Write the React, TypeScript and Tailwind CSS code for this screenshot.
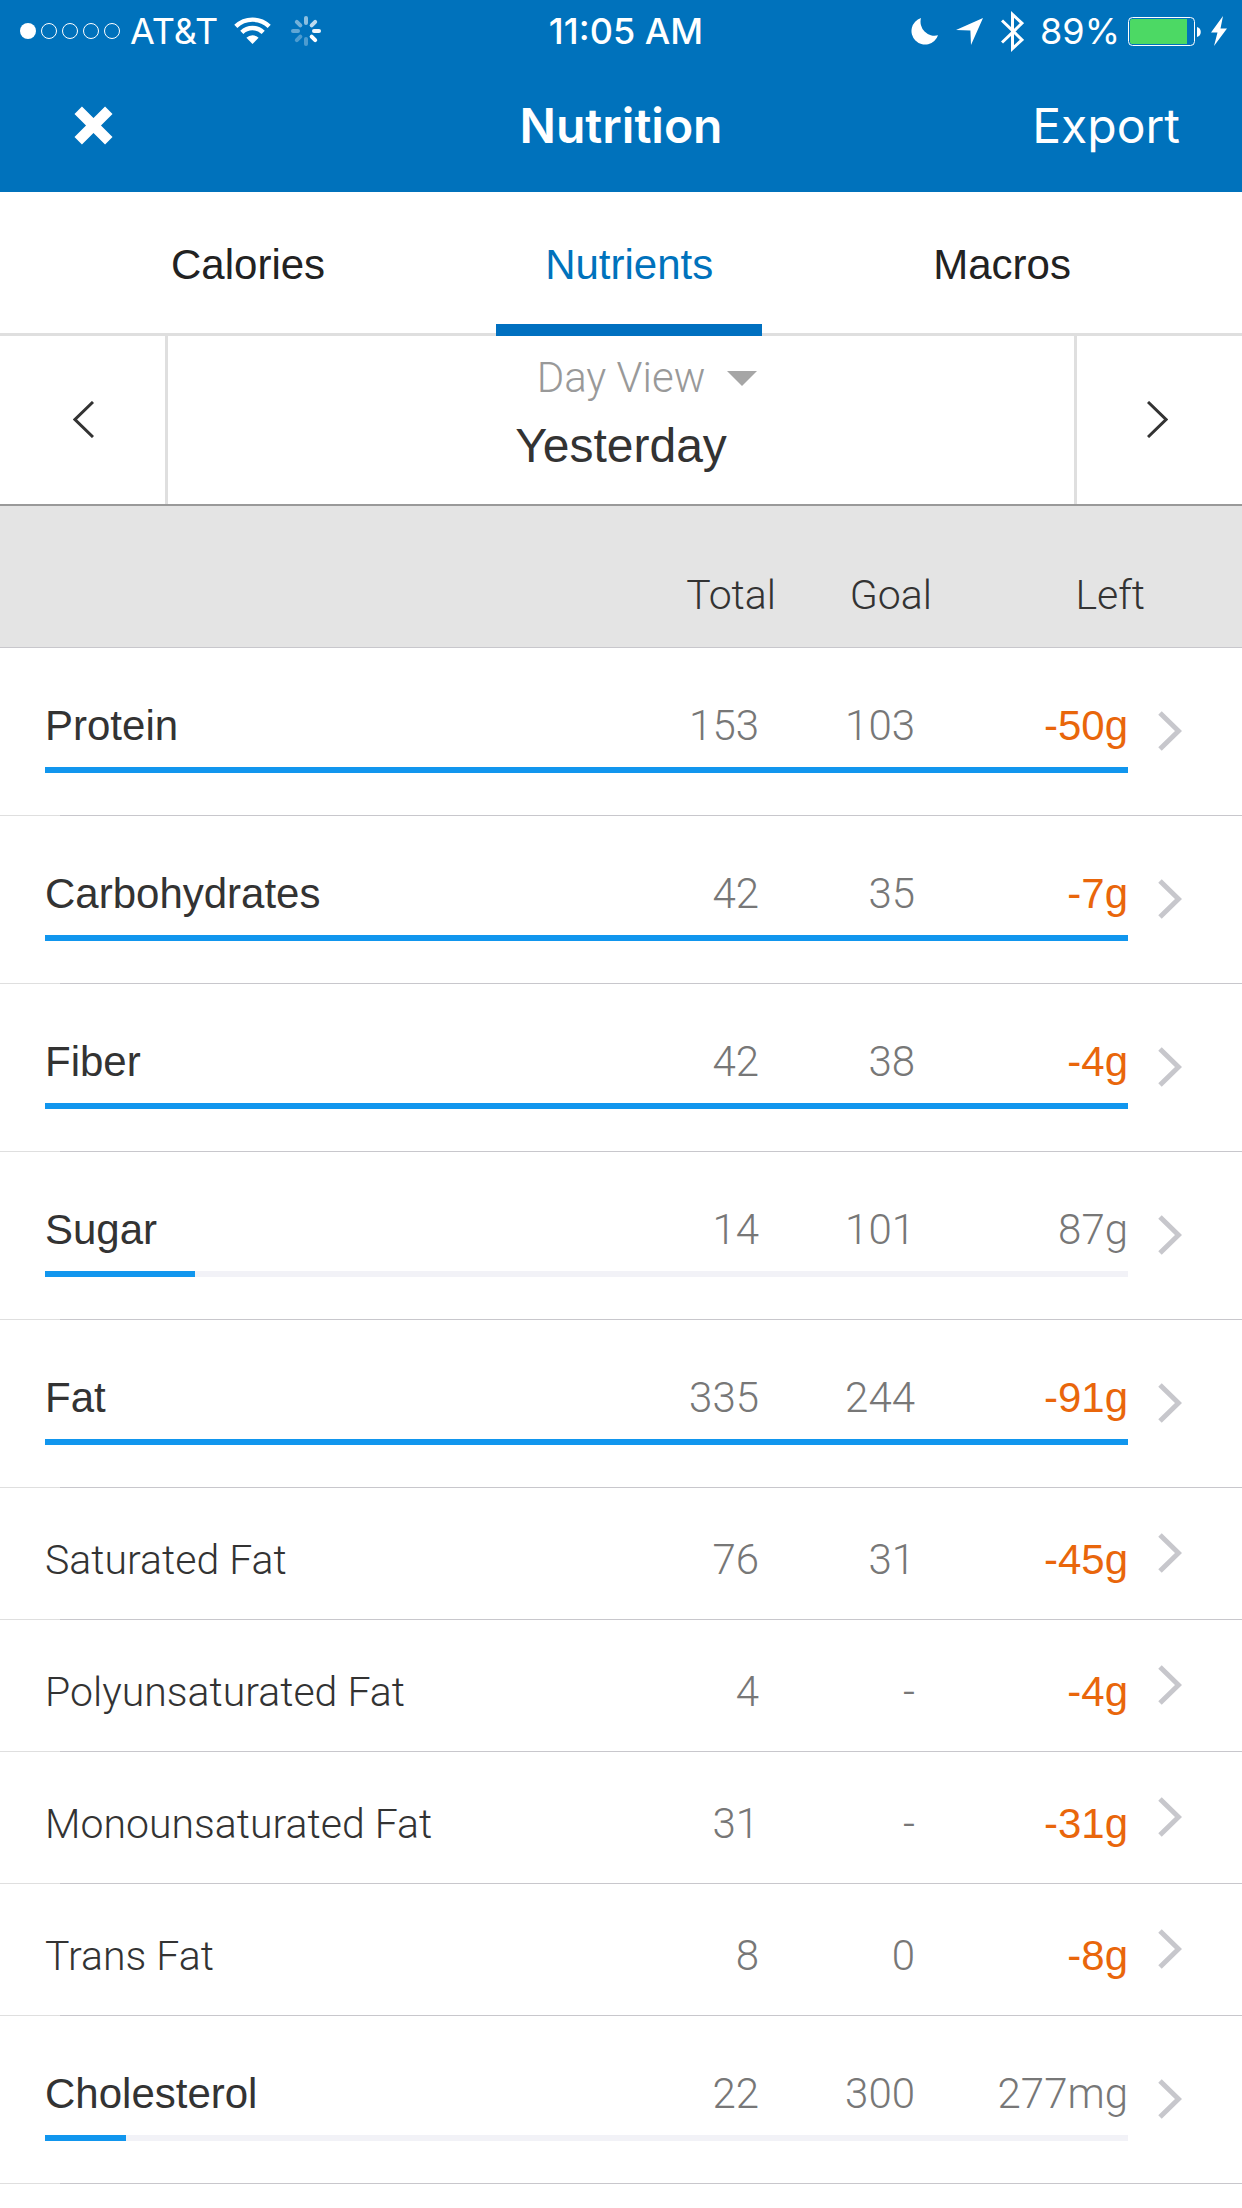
import { useState } from 'react';

type Nutrient = {
  name: string;
  total: number;
  goal: number | null;
  left: number;
  unit: string;
  main?: boolean;
  progress?: number;
};

const nutrients: Nutrient[] = [
  { name: 'Protein', total: 153, goal: 103, left: -50, unit: 'g', main: true, progress: 100 },
  { name: 'Carbohydrates', total: 42, goal: 35, left: -7, unit: 'g', main: true, progress: 100 },
  { name: 'Fiber', total: 42, goal: 38, left: -4, unit: 'g', main: true, progress: 100 },
  { name: 'Sugar', total: 14, goal: 101, left: 87, unit: 'g', main: true, progress: 13.86 },
  { name: 'Fat', total: 335, goal: 244, left: -91, unit: 'g', main: true, progress: 100 },
  { name: 'Saturated Fat', total: 76, goal: 31, left: -45, unit: 'g' },
  { name: 'Polyunsaturated Fat', total: 4, goal: null, left: -4, unit: 'g' },
  { name: 'Monounsaturated Fat', total: 31, goal: null, left: -31, unit: 'g' },
  { name: 'Trans Fat', total: 8, goal: 0, left: -8, unit: 'g' },
  { name: 'Cholesterol', total: 22, goal: 300, left: 277, unit: 'mg', main: true, progress: 7.5 },
];

const tabs = ['Calories', 'Nutrients', 'Macros'];

const SignalDots = () => (
  <svg width="100" height="16" viewBox="0 0 100 16" fill="none" stroke="white">
    <circle cx="8" cy="8" r="8" fill="white" stroke="none" />
    <circle cx="29" cy="8" r="7.5" />
    <circle cx="50" cy="8" r="7.5" />
    <circle cx="71" cy="8" r="7.5" />
    <circle cx="92" cy="8" r="7.5" />
  </svg>
);

const WifiIcon = () => (
  <svg width="37" height="28" viewBox="0 0 37 28" fill="none" stroke="white" strokeWidth="4.4">
    <path d="M1.8 9.4a24 24 0 0 1 33.4 0" />
    <path d="M7.8 15.4a15.2 15.2 0 0 1 21.4 0" />
    <path d="M12.4 20.8a8.6 8.6 0 0 1 12.2 0L18.5 27z" fill="white" stroke="none" />
  </svg>
);

const spokes = [
  { angle: 0, opacity: 0.55 },
  { angle: 45, opacity: 0.75 },
  { angle: 90, opacity: 0.95 },
  { angle: 135, opacity: 1 },
  { angle: 180, opacity: 0.3 },
  { angle: 225, opacity: 0.3 },
  { angle: 270, opacity: 0.38 },
  { angle: 315, opacity: 0.45 },
];

const Spinner = () => (
  <svg width="30" height="30" viewBox="0 0 30 30" stroke="white" strokeWidth="4" strokeLinecap="round">
    {spokes.map((s) => (
      <path key={s.angle} d="M15 2v5" opacity={s.opacity} transform={`rotate(${s.angle} 15 15)`} />
    ))}
  </svg>
);

const StatusIcons = () => (
  <>
    <svg width="27" height="27" viewBox="0 0 27 27" fill="white">
      <path d="M10 0A13.6 13.6 0 1 0 27 17.2 14 14 0 0 1 10 0z" />
    </svg>
    <svg className="ml-[18px]" width="27" height="27" viewBox="0 0 27 27" fill="white">
      <path d="M27 0L15 27 14.400 12.600 0 12z" />
    </svg>
    <svg className="ml-[18px]" width="23" height="41" viewBox="0 0 23 41" fill="none" stroke="white" strokeWidth="3">
      <path d="M1 9.500L21 28.800 11.500 37.500V3.500L21 12.200 1 31.500" />
    </svg>
  </>
);

const Battery = () => (
  <svg className="ml-2" width="99" height="31" viewBox="0 0 99 31">
    <rect x="0.5" y="1.5" width="66" height="28" rx="4" fill="none" stroke="white" />
    <path d="M4 3h55v25H4a2 2 0 0 1-2-2V5a2 2 0 0 1 2-2z" fill="#4cd964" />
    <path d="M69 11c5 1 5 9 0 10z" fill="white" />
    <path d="M95 0L83 16.500h6.500L86 30 99 12.500h-6.500z" fill="white" />
  </svg>
);

const RowChevron = () => (
  <svg width="24" height="40" viewBox="0 0 24 40" fill="none" stroke="#c7c7cc" strokeWidth="5">
    <path d="M2 2l18.500 18L2 38" />
  </svg>
);

const NutrientRow = ({ item }: { item: Nutrient }) => (
  <tr
    className={`grid grid-cols-[1fr_156px_156px_213px_114px] items-center bg-[linear-gradient(to_right,#dfdfdf_60px,#c8c7cc_60px)] bg-[length:100%_1px] bg-bottom bg-no-repeat pl-[45px] ${
      item.main ? 'h-[168px]' : 'h-[132px]'
    }`}
  >
    <th
      scope="row"
      className={`text-left text-[#333] ${
        item.main ? 'pt-[50px] font-["Liberation_Sans",sans-serif] font-normal' : 'pt-3 text-[41px] font-light'
      }`}
    >
      {item.name}
    </th>
    <td className={item.main ? 'pt-[50px]' : 'pt-3'}>{item.total}</td>
    <td className={item.main ? 'pt-[50px]' : 'pt-3'}>{item.goal === null ? '-' : item.goal}</td>
    <td
      className={`${item.main ? 'pt-[50px]' : 'pt-3'} ${
        item.left < 0 ? 'font-["Liberation_Sans",sans-serif] font-normal text-[#e9660b]' : ''
      }`}
    >
      {item.left}
      {item.unit}
    </td>
    <td className={`flex h-full items-center pb-0.5 pl-[30px] ${item.main ? 'row-span-2' : ''}`}>
      <button type="button" aria-label={`${item.name} details`}>
        <RowChevron />
      </button>
    </td>
    {item.main && (
      <td colSpan={4} className="col-span-4 row-start-2 pt-[13px] pb-[43px]">
        <div className="h-1.5 bg-[#f2f2f7]">
          <div className="h-full bg-[#1196ee]" style={{ width: `${item.progress}%` }} />
        </div>
      </td>
    )}
  </tr>
);

export default function App() {
  const [activeTab, setActiveTab] = useState('Nutrients');
  const [view, setView] = useState('Day View');

  return (
    <div className="min-h-screen w-full bg-white font-[Roboto,sans-serif] text-[42px] leading-[56px]">
      <header className="bg-[#0072bc] font-[Inter,sans-serif] text-white">
        <div className="grid h-[60px] grid-cols-[1fr_auto_1fr] items-center pt-0.5 pr-2.5 pl-5 text-[36px] leading-[44px]">
          <div className="flex items-center">
            <SignalDots />
            <span className="mr-4 ml-2.5">AT&amp;T</span>
            <WifiIcon />
            <span className="ml-5">
              <Spinner />
            </span>
          </div>
          <span className="font-medium">11:05 AM</span>
          <div className="flex items-center justify-end pr-[5px]">
            <StatusIcons />
            <span className="ml-4">89%</span>
            <Battery />
          </div>
        </div>
        <div className="grid h-[132px] grid-cols-[1fr_auto_1fr] items-center px-[62px] text-[48px] leading-[60px]">
          <button type="button" aria-label="Close" className="mb-0.5 ml-3 justify-self-start">
            <svg width="39" height="39" viewBox="0 0 37 37" stroke="white" strokeWidth="10">
              <path d="M4 4l29 29M33 4L4 33" />
            </svg>
          </button>
          <h1 className="font-semibold">Nutrition</h1>
          <button type="button" className="justify-self-end">
            Export
          </button>
        </div>
      </header>

      <nav className='flex h-36 justify-evenly border-b-[3px] border-[#dfdfdf] font-["Liberation_Sans",sans-serif]'>
        {tabs.map((tab) => (
          <button
            key={tab}
            type="button"
            onClick={() => setActiveTab(tab)}
            className={`-mb-[3px] border-b-[12px] px-[49px] pt-3.5 ${
              activeTab === tab ? 'border-[#0070c0] text-[#0072bc]' : 'border-transparent text-[#222]'
            }`}
          >
            {tab}
          </button>
        ))}
      </nav>

      <section className="flex h-[170px] border-b-2 border-[#999] text-[#333]">
        <button type="button" aria-label="Previous day" className="flex w-[168px] items-center justify-center border-r-[3px] border-[#dfdfdf] pb-0.5 pl-0.5">
          <svg width="21" height="37" viewBox="0 0 21 37" fill="none" stroke="currentColor" strokeWidth="3">
            <path d="M20 1L2 18.500l18 17.500" />
          </svg>
        </button>
        <div className="flex flex-1 flex-col items-center pt-3.5">
          <div className="flex items-center gap-[22px] pl-[52px] font-light text-[#999]">
            <select
              aria-label="View"
              value={view}
              onChange={(e) => setView(e.target.value)}
              className="h-14 appearance-none bg-transparent field-sizing-content"
            >
              <option>Day View</option>
              <option>Week View</option>
            </select>
            <svg width="30" height="15" viewBox="0 0 30 15" fill="#a6a6a6">
              <path d="M0 0h30L15 15z" />
            </svg>
          </div>
          <div className='pt-2.5 font-["Liberation_Sans",sans-serif] text-[48px] leading-[60px]'>Yesterday</div>
        </div>
        <button type="button" aria-label="Next day" className="flex w-[168px] items-center justify-center border-l-[3px] border-[#dfdfdf] pr-1 pb-0.5">
          <svg width="21" height="37" viewBox="0 0 21 37" fill="none" stroke="currentColor" strokeWidth="3">
            <path d="M1 1l18 17.500L1 36" />
          </svg>
        </button>
      </section>

      <table className="block w-full text-right font-light text-[#777]">
        <thead className="block border-b border-[#c8c7cc] bg-[#e4e4e4] text-[41px] text-[#333]">
          <tr className="grid h-[141px] grid-cols-[1fr_156px_156px_213px_97px] pt-[61px]">
            <td />
            <th scope="col" className="font-light">Total</th>
            <th scope="col" className="font-light">Goal</th>
            <th scope="col" className="font-light">Left</th>
          </tr>
        </thead>
        <tbody className="block">
          {nutrients.map((item) => (
            <NutrientRow key={item.name} item={item} />
          ))}
        </tbody>
      </table>
    </div>
  );
}
